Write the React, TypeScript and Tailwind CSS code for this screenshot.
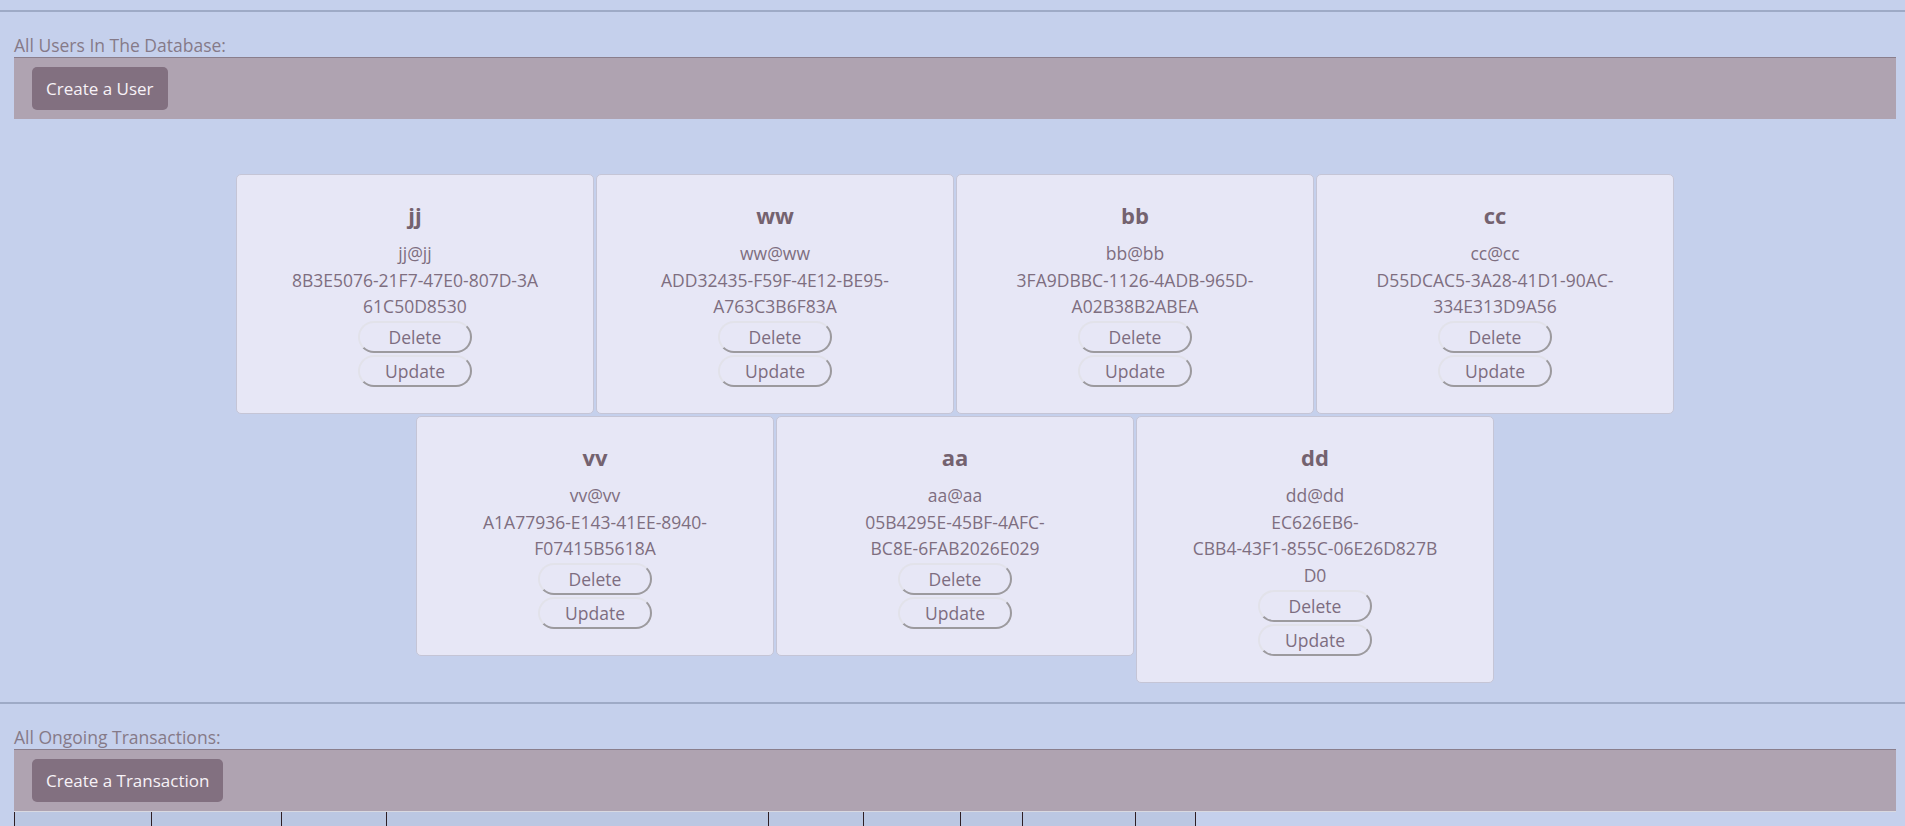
const users = [
  { name: "jj", email: "jj@jj", id: ["8B3E5076-21F7-47E0-807D-3A", "61C50D8530"] },
  { name: "ww", email: "ww@ww", id: ["ADD32435-F59F-4E12-BE95-", "A763C3B6F83A"] },
  { name: "bb", email: "bb@bb", id: ["3FA9DBBC-1126-4ADB-965D-", "A02B38B2ABEA"] },
  { name: "cc", email: "cc@cc", id: ["D55DCAC5-3A28-41D1-90AC-", "334E313D9A56"] },
  { name: "vv", email: "vv@vv", id: ["A1A77936-E143-41EE-8940-", "F07415B5618A"] },
  { name: "aa", email: "aa@aa", id: ["05B4295E-45BF-4AFC-", "BC8E-6FAB2026E029"] },
  { name: "dd", email: "dd@dd", id: ["EC626EB6-", "CBB4-43F1-855C-06E26D827B", "D0"] },
];

// widths of the transaction table header cells, in px
const columns = [137, 130, 105, 382, 95, 97, 62, 113, 61];

function Divider() {
  return <div className="h-[2px] w-full bg-[#9eaac6]" />;
}

function SectionHeader({ label, action }: { label: string; action: string }) {
  return (
    <div className="pl-[14px] pr-[9px]">
      <p className="mt-[21px] text-[17.5px] leading-[24px] text-[#857a88]">
        {label}
      </p>
      <div className="border-t border-[#8a7e8c] bg-[#afa3b1] pb-[9px] pl-[18px] pt-[9px]">
        <button
          type="button"
          className="h-[43px] rounded-[5px] bg-[#827080] px-[14px] text-[17px] leading-[24px] text-[#f7f2f7]"
        >
          {action}
        </button>
      </div>
    </div>
  );
}

function PillButton({ children }: { children: string }) {
  return (
    <button
      type="button"
      className="h-[32px] w-[114px] rounded-[16px] border-2 border-b-[#9c9a9e] border-l-[#e2e2ea] border-r-[#9c9a9e] border-t-[#e2e2ea] bg-[#e7e7f6] text-[17.5px] leading-[26px] text-[#7d6d80]"
    >
      {children}
    </button>
  );
}

function UserCard({ user }: { user: (typeof users)[number] }) {
  return (
    <div className="m-[1px] flex w-[358px] flex-col items-center rounded-[5px] border border-[#c5c5d6] bg-[#e7e7f6] pb-[26px] pt-[24.5px] text-center">
      <h3 className="mb-[3px] text-[22px] font-bold leading-[30px] text-[#74626f]">{user.name}</h3>
      <div className="mt-[7.5px] text-[17.5px] leading-[26.5px] text-[#7e6e80]">
        <p>{user.email}</p>
        {user.id.map((line) => (
          <p key={line} className="whitespace-nowrap">
            {line}
          </p>
        ))}
      </div>
      <div className="mt-[1.5px] flex flex-col items-center gap-[2px]">
        <PillButton>Delete</PillButton>
        <PillButton>Update</PillButton>
      </div>
    </div>
  );
}

export default function App() {
  return (
    <div className="min-h-screen overflow-hidden bg-[#c5d0ec] pt-[10px] font-['Open_Sans','Noto_Sans',sans-serif]">
      <Divider />
      <SectionHeader label="All Users In The Database:" action="Create a User" />

      <div className="mt-[54px] pl-[5px]">
        <div className="mx-auto flex w-[1440px] flex-wrap items-start justify-center">
          {users.map((user) => (
            <UserCard key={user.name} user={user} />
          ))}
        </div>
      </div>

      <div className="mt-[18.5px]">
        <Divider />
      </div>
      <SectionHeader label="All Ongoing Transactions:" action="Create a Transaction" />
      <div className="ml-[14px] mr-[9px] border-t border-[#d9d9e1]">
        <div className="flex">
          {columns.map((w, i) => (
            <div
              key={i}
              style={{ width: w }}
              className={
                i === columns.length - 1
                  ? "h-[40px] border-l border-r border-[#2e1e24] bg-[#bbc7e2]"
                  : "h-[40px] border-l border-[#2e1e24] bg-[#bbc7e2]"
              }
            />
          ))}
        </div>
      </div>
    </div>
  );
}
